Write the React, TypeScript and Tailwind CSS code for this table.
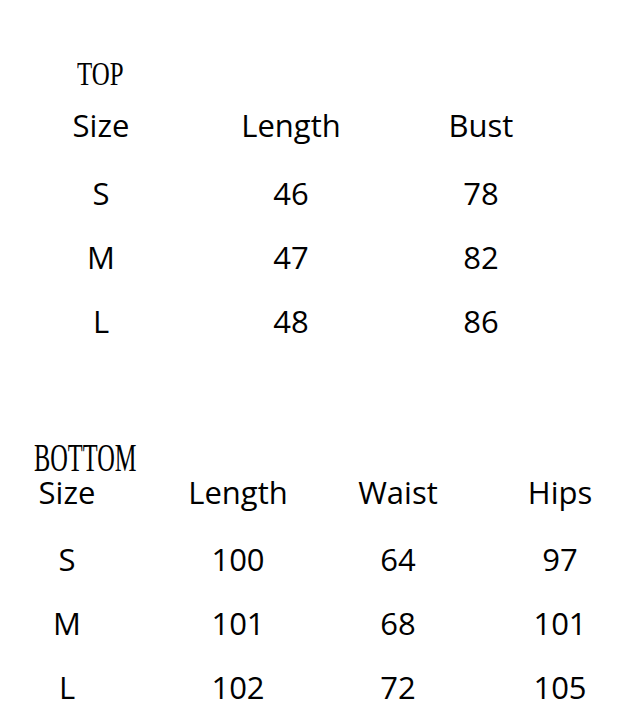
const TOP_ROWS = [
  ["Size", "Length", "Bust"],
  ["S", "46", "78"],
  ["M", "47", "82"],
  ["L", "48", "86"],
];

const BOTTOM_ROWS = [
  ["Size", "Length", "Waist", "Hips"],
  ["S", "100", "64", "97"],
  ["M", "101", "68", "101"],
  ["L", "102", "72", "105"],
];

const sans = "font-['Open_Sans','Noto_Sans',sans-serif]";
const serif = "font-['Liberation_Serif','Times_New_Roman',serif]";

export default function App() {
  return (
    <div className={`h-[721px] w-[621px] overflow-hidden bg-white text-black ${sans}`}>
      {/* top */}
      <section className="pt-[58px]">
        <div className={`mb-[14px] pl-[77px] text-[33px] leading-[33px] ${serif}`}>
          <span className="inline-block origin-left scale-x-[0.755]">TOP</span>
        </div>
        <div className="ml-[6px] grid grid-cols-[190px_190px_190px] grid-rows-[56px_64px_64px_64px] text-[31px] leading-[64px]">
          {TOP_ROWS.flat().map((cell, i) => (
            <div key={i} className={i < 3 ? "text-center leading-[40px]" : "text-center"}>
              {cell}
            </div>
          ))}
        </div>
      </section>

      {/* bottom */}
      <section className="mt-[97px]">
        <div className={`pl-[34px] text-[39px] leading-[16px] ${serif}`}>
          <span className="inline-block origin-left scale-x-[0.625]">BOTTOM</span>
        </div>
        <div className="mt-[6px] grid grid-cols-[134px_208px_112px_212px] grid-rows-[55px_64px_64px_64px] text-[31px] leading-[64px]">
          {BOTTOM_ROWS.flat().map((cell, i) => (
            <div key={i} className={i < 4 ? "text-center leading-[40px]" : "text-center"}>
              {cell}
            </div>
          ))}
        </div>
      </section>
    </div>
  );
}
